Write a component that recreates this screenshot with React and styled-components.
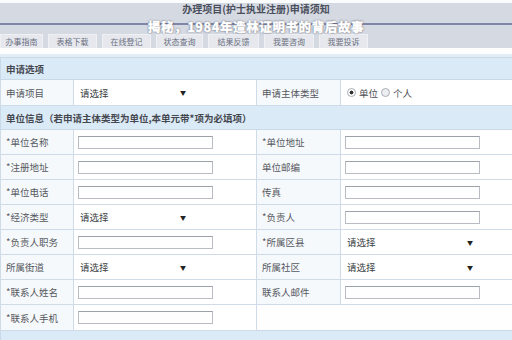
import styled, { createGlobalStyle } from "styled-components";

const GlobalStyle = createGlobalStyle`
  body {
    margin: 0;
    background: #ffffff;
    font-family: "Noto Sans CJK SC", "Liberation Sans", sans-serif;
  }
`;

const Page = styled.div`
  position: relative;
  width: 512px;
  height: 340px;
  overflow: hidden;
  background: #fbfcfd;
`;

const TopBar = styled.div`
  margin-top: 3px;
  background: #d5d9e2;
`;

const Title = styled.div`
  text-align: center;
  font-size: 10px;
  font-weight: 700;
  line-height: 11px;
  color: #4a4f5c;
  height: 11px;
`;

const Rule = styled.div`
  height: 2px;
  background: #7f86a6;
  margin-top: 9px;
`;

const Tabs = styled.div`
  display: flex;
  gap: 5px;
  padding: 9px 0 0 0;
`;

const Tab = styled.div`
  width: ${(p) => p.$w}px;
  height: 14px;
  background: #e6e8ee;
  border: 1px solid #eef0f4;
  border-bottom: none;
  box-sizing: border-box;
  font-size: 8px;
  line-height: 13px;
  color: #6b7080;
  text-align: center;
  white-space: nowrap;
`;

const Gap = styled.div`
  height: 6px;
  background: #fdfdfe;
  border-bottom: 3px solid #e3edf6;
`;

const Banner = styled.div`
  position: absolute;
  top: 19.5px;
  left: 0;
  right: 0;
  text-align: center;
  font-size: 12.5px;
  line-height: 13px;
  font-weight: 900;
  letter-spacing: 0.6px;
  color: #ffffff;
  -webkit-text-stroke: 0.4px #ffffff;
  text-shadow: 0 0 2px rgba(60, 60, 80, 0.75), 0 0 1px rgba(60, 60, 80, 0.9);
`;

const Table = styled.table`
  width: 512px;
  border-collapse: collapse;
  table-layout: fixed;
  font-size: 9.5px;
  color: #4d4f55;
`;

const SectionRow = styled.tr`
  background: #dbeaf7;
  height: ${(p) => p.$h}px;
`;

const SectionCell = styled.td`
  padding: 0 5px;
  border: 1px solid #c9d9e7;
  font-weight: 600;
  color: #44474e;
  white-space: nowrap;
`;

const Row = styled.tr`
  height: ${(p) => p.$h || 25}px;
`;

const Label = styled.td`
  padding: 0 5px;
  border: 1px solid #cfdce8;
  background: #f6f9fb;
  white-space: nowrap;
  color: #55585f;
`;

const Cell = styled.td`
  padding: 0 4px;
  border: 1px solid #cfdce8;
  background: #ffffff;
  white-space: nowrap;
`;

const Empty = styled.td`
  border: none;
  background: #fefefe;
`;

const TextInput = styled.div`
  width: 135px;
  height: 13px;
  box-sizing: border-box;
  border: 1px solid #b9bcc2;
  border-top-color: #9da1a8;
  background: #fefefe;
`;

const Select = styled.div`
  display: flex;
  justify-content: space-between;
  align-items: center;
  width: ${(p) => p.$w}px;
  padding-left: 2px;
  color: #3c3f45;
`;

const Arrow = styled.span`
  font-size: 6px;
  color: #222;
`;

const Radios = styled.div`
  display: flex;
  align-items: center;
  gap: 3px;
  padding-left: 2px;
`;

const Radio = styled.span`
  width: 7px;
  height: 7px;
  border-radius: 50%;
  border: 1px solid #a9adb4;
  background: ${(p) => (p.$on ? "radial-gradient(circle, #333 0 35%, #fff 45%)" : "#eceef1")};
`;

const tabs = [
  ["办事指南", 43],
  ["表格下载", 49],
  ["在线登记", 49],
  ["状态查询", 47],
  ["结果反馈", 51],
  ["我要咨询", 50],
  ["我要投诉", 49],
];

function SelectBox({ w }) {
  return (
    <Select $w={w}>
      <span>请选择</span>
      <Arrow>▼</Arrow>
    </Select>
  );
}

function Field({ type, w }) {
  if (type === "select") return <SelectBox w={w} />;
  return <TextInput />;
}

const rows = [
  [["*单位名称"], ["*单位地址"]],
  [["*注册地址"], ["单位邮编"]],
  [["*单位电话"], ["传真"]],
  [["*经济类型", "select"], ["*负责人"]],
  [["*负责人职务"], ["*所属区县", "select"]],
  [["所属街道", "select"], ["所属社区", "select"]],
  [["*联系人姓名"], ["联系人邮件"]],
];

export default function App() {
  return (
    <>
      <GlobalStyle />
      <Page>
        <TopBar>
          <Title>办理项目(护士执业注册)申请须知</Title>
          <Rule />
          <Tabs>
            {tabs.map(([t, w]) => (
              <Tab key={t} $w={w}>
                {t}
              </Tab>
            ))}
          </Tabs>
        </TopBar>
        <Gap />
        <Banner>揭秘，1984年造林证明书的背后故事</Banner>
        <Table>
          <colgroup>
            <col style={{ width: 73 }} />
            <col style={{ width: 183 }} />
            <col style={{ width: 84 }} />
            <col style={{ width: 172 }} />
          </colgroup>
          <tbody>
            <SectionRow $h={22}>
              <SectionCell colSpan={4}>申请选项</SectionCell>
            </SectionRow>
            <Row $h={26}>
              <Label>申请项目</Label>
              <Cell>
                <SelectBox w={106} />
              </Cell>
              <Label>申请主体类型</Label>
              <Cell>
                <Radios>
                  <Radio $on />
                  <span>单位</span>
                  <Radio />
                  <span>个人</span>
                </Radios>
              </Cell>
            </Row>
            <SectionRow $h={24}>
              <SectionCell colSpan={4}>
                单位信息（若申请主体类型为单位,本单元带*项为必填项）
              </SectionCell>
            </SectionRow>
            {rows.map(([l, r]) => (
              <Row key={l[0]}>
                <Label>{l[0]}</Label>
                <Cell>
                  <Field type={l[1]} w={106} />
                </Cell>
                <Label>{r[0]}</Label>
                <Cell>
                  <Field type={r[1]} w={126} />
                </Cell>
              </Row>
            ))}
            <Row $h={26}>
              <Label>*联系人手机</Label>
              <Cell>
                <TextInput />
              </Cell>
              <Empty />
              <Empty />
            </Row>
            <SectionRow $h={12}>
              <SectionCell colSpan={4} />
            </SectionRow>
          </tbody>
        </Table>
      </Page>
    </>
  );
}
